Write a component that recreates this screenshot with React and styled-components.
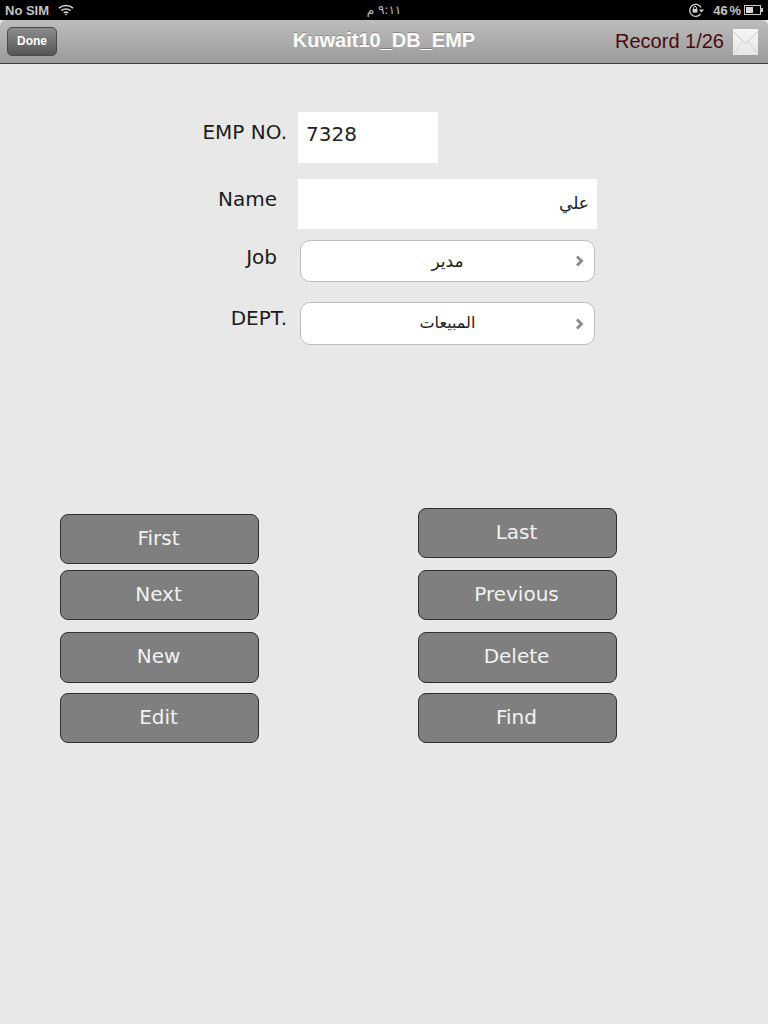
import React from "react";
import styled, { createGlobalStyle } from "styled-components";

const Global = createGlobalStyle`
  html, body { margin:0; padding:0; background:#e8e8e8; }
  body { font-family:"DejaVu Sans", sans-serif; }
`;

const Page = styled.div`
  width:768px;
  height:1024px;
  overflow:hidden;
  background:#e8e8e8;
`;

const StatusBar = styled.div`
  height:20px;
  background:#000;
  display:grid;
  grid-template-columns:1fr auto 1fr;
  align-items:center;
  padding:0 5px;
  box-sizing:border-box;
  color:#c4c4c4;
  font:bold 13px "Liberation Sans", sans-serif;
`;

const StatusLeft = styled.div`
  display:flex;
  align-items:center;
  gap:9px;
`;

const StatusTime = styled.div`
  font:12px "DejaVu Sans", sans-serif;
  color:#bdbdbd;
  letter-spacing:1.4px;
`;

const StatusRight = styled.div`
  display:flex;
  justify-content:flex-end;
  align-items:center;
  gap:8px;
`;

const Percent = styled.span`
  word-spacing:-2px;
`;

const Battery = styled.svg`
  margin-left:-5px;
`;

const NavBar = styled.div`
  height:43px;
  background:linear-gradient(#bdbdbd, #9a9a9a);
  border-bottom:1px solid #3c3c3c;
  border-radius:6px 6px 0 0;
  box-sizing:content-box;
  display:grid;
  grid-template-columns:1fr auto 1fr;
  align-items:center;
  padding:0 7px;
`;

const DoneButton = styled.div`
  width:48px;
  height:27px;
  border-radius:5px;
  border:1px solid #4a4a4a;
  box-sizing:content-box;
  background:linear-gradient(#8c8c8c, #565656);
  color:#fff;
  font:bold 12px/27px "Liberation Sans", sans-serif;
  text-align:center;
`;

const NavTitle = styled.div`
  color:#fff;
  font:bold 20px "Liberation Sans", sans-serif;
  text-shadow:0 -1px 0 rgba(0,0,0,.25);
  margin-top:-2px;
`;

const NavRight = styled.div`
  display:flex;
  justify-content:flex-end;
  align-items:center;
  gap:9px;
  margin-right:3px;
`;

const RecordText = styled.div`
  color:#4a0a0e;
  font:20px "Liberation Sans", sans-serif;
`;

const Form = styled.div`
  padding-top:48px;
  display:flex;
  flex-direction:column;
`;

const Row = styled.div`
  display:flex;
  margin-top:${p => p.$top || 0}px;
  height:${p => p.$height}px;
`;

const Label = styled.div`
  width:${p => p.$width}px;
  text-align:right;
  font-size:20px;
  line-height:24px;
  color:#1c1c1c;
  padding-top:${p => p.$top || 0}px;
  box-sizing:border-box;
`;

const Field = styled.div`
  width:${p => p.$width}px;
  margin-left:${p => p.$gap}px;
  background:#fff;
  color:#222;
  font-size:${p => p.$size || 20}px;
  line-height:${p => p.$line || 44}px;
  padding:0 8px;
  box-sizing:border-box;
  text-align:${p => (p.$rtl ? "right" : "left")};
`;

const Select = styled.div`
  width:295px;
  margin-left:${p => p.$gap}px;
  background:#fff;
  border:1px solid #bdbdbd;
  border-radius:10px;
  box-sizing:border-box;
  position:relative;
  display:flex;
  align-items:center;
  justify-content:center;
  color:#1c1c1c;
  font-size:${p => p.$size || 17}px;
  padding-bottom:${p => p.$lift || 0}px;
`;

const Chevron = styled.svg`
  position:absolute;
  right:10px;
  top:50%;
  margin-top:-6px;
`;

const Buttons = styled.div`
  display:flex;
  padding-left:60px;
  gap:159px;
  margin-top:${p => p.$top}px;
`;

const Column = styled.div`
  display:flex;
  flex-direction:column;
`;

const ActionButton = styled.div`
  width:199px;
  height:${p => p.$height || 50}px;
  margin-top:${p => p.$top || 0}px;
  background:#7f7f7f;
  border:1px solid #303030;
  border-radius:8px;
  box-sizing:border-box;
  color:#f2f2f2;
  font-size:20px;
  line-height:${p => (p.$height || 50) - 4}px;
  padding-right:2px;
  text-align:center;
`;

const WifiIcon = () => (
  <svg width="16" height="12" viewBox="0 0 16 12" fill="none" stroke="#d4d4d4" strokeWidth="1.6">
    <path d="M1 4.2C5 .6 11 .6 15 4.2" />
    <path d="M3.4 6.6C6 4.4 10 4.4 12.6 6.6" />
    <path d="M5.8 9C7 8 9 8 10.2 9" />
    <path d="M8 11.5 6.8 10.2C7.4 9.8 8.6 9.8 9.2 10.2Z" fill="#d4d4d4" stroke="none" />
  </svg>
);

const LockIcon = () => (
  <svg width="17" height="14" viewBox="0 0 17 14" fill="none">
    <path d="M12.6 10.8A6 6 0 1 1 13 4.5" stroke="#d8d8d8" strokeWidth="1.3" />
    <path d="M11 6.6h5l-2.5 2.8Z" fill="#d8d8d8" />
    <rect x="4.6" y="6" width="4.8" height="3.6" fill="#d8d8d8" />
    <path d="M5.6 6V4.8a1.4 1.4 0 0 1 2.8 0V6" stroke="#d8d8d8" strokeWidth="1" />
  </svg>
);

const BatteryIcon = () => (
  <Battery width="19" height="10" viewBox="0 0 19 10">
    <rect x=".5" y=".5" width="16" height="9" fill="none" stroke="#c8c8c8" />
    <rect x="2" y="2" width="7" height="6" fill="#d8d8d8" />
    <rect x="17" y="3" width="2" height="4" fill="#c8c8c8" />
  </Battery>
);

const MailIcon = () => (
  <svg width="25" height="26" viewBox="0 0 25 26">
    <defs>
      <linearGradient id="mailFill" x1="0" y1="0" x2="0" y2="1">
        <stop offset="0" stopColor="#f6f6f6" />
        <stop offset="1" stopColor="#e6e6e6" />
      </linearGradient>
    </defs>
    <rect width="25" height="26" fill="url(#mailFill)" />
    <path d="M1 3 12.5 15 24 3" fill="none" stroke="#c8c8c8" />
    <path d="M1 24 10 12M24 24 15 12" fill="none" stroke="#d4d4d4" />
  </svg>
);

const ChevronIcon = () => (
  <Chevron width="9" height="12" viewBox="0 0 9 12" fill="none" stroke="#8a8a8a" strokeWidth="2.8">
    <path d="M2 1.5 6.5 6 2 10.5" />
  </Chevron>
);

const App = () => {
  return (
    <Page>
      <Global />
      <StatusBar>
        <StatusLeft>No SIM <WifiIcon /></StatusLeft>
        <StatusTime dir="rtl">٩:١١ م</StatusTime>
        <StatusRight>
          <LockIcon />
          <Percent>46 %</Percent>
          <BatteryIcon />
        </StatusRight>
      </StatusBar>
      <NavBar>
        <DoneButton>Done</DoneButton>
        <NavTitle>Kuwait10_DB_EMP</NavTitle>
        <NavRight>
          <RecordText>Record 1/26</RecordText>
          <MailIcon />
        </NavRight>
      </NavBar>

      <Form>
        <Row $height={51}>
          <Label $width={287} $top={8}>EMP NO.</Label>
          <Field $width={140} $gap={11}>7328</Field>
        </Row>
        <Row $top={16} $height={50}>
          <Label $width={277} $top={8}>Name</Label>
          <Field $width={299} $gap={21} $rtl $size={17} $line={48}>علي</Field>
        </Row>
        <Row $top={11} $height={42}>
          <Label $width={277} $top={5}>Job</Label>
          <Select $gap={23}>مدير<ChevronIcon /></Select>
        </Row>
        <Row $top={20} $height={43}>
          <Label $width={287} $top={4}>DEPT.</Label>
          <Select $gap={13} $size={16} $lift={2}>المبيعات<ChevronIcon /></Select>
        </Row>
      </Form>

      <Buttons $top={163}>
        <Column>
          <ActionButton $top={6}>First</ActionButton>
          <ActionButton $top={6}>Next</ActionButton>
          <ActionButton $top={12} $height={51}>New</ActionButton>
          <ActionButton $top={10}>Edit</ActionButton>
        </Column>
        <Column>
          <ActionButton>Last</ActionButton>
          <ActionButton $top={12}>Previous</ActionButton>
          <ActionButton $top={12} $height={51}>Delete</ActionButton>
          <ActionButton $top={10}>Find</ActionButton>
        </Column>
      </Buttons>
    </Page>
  );
};

export default App;
